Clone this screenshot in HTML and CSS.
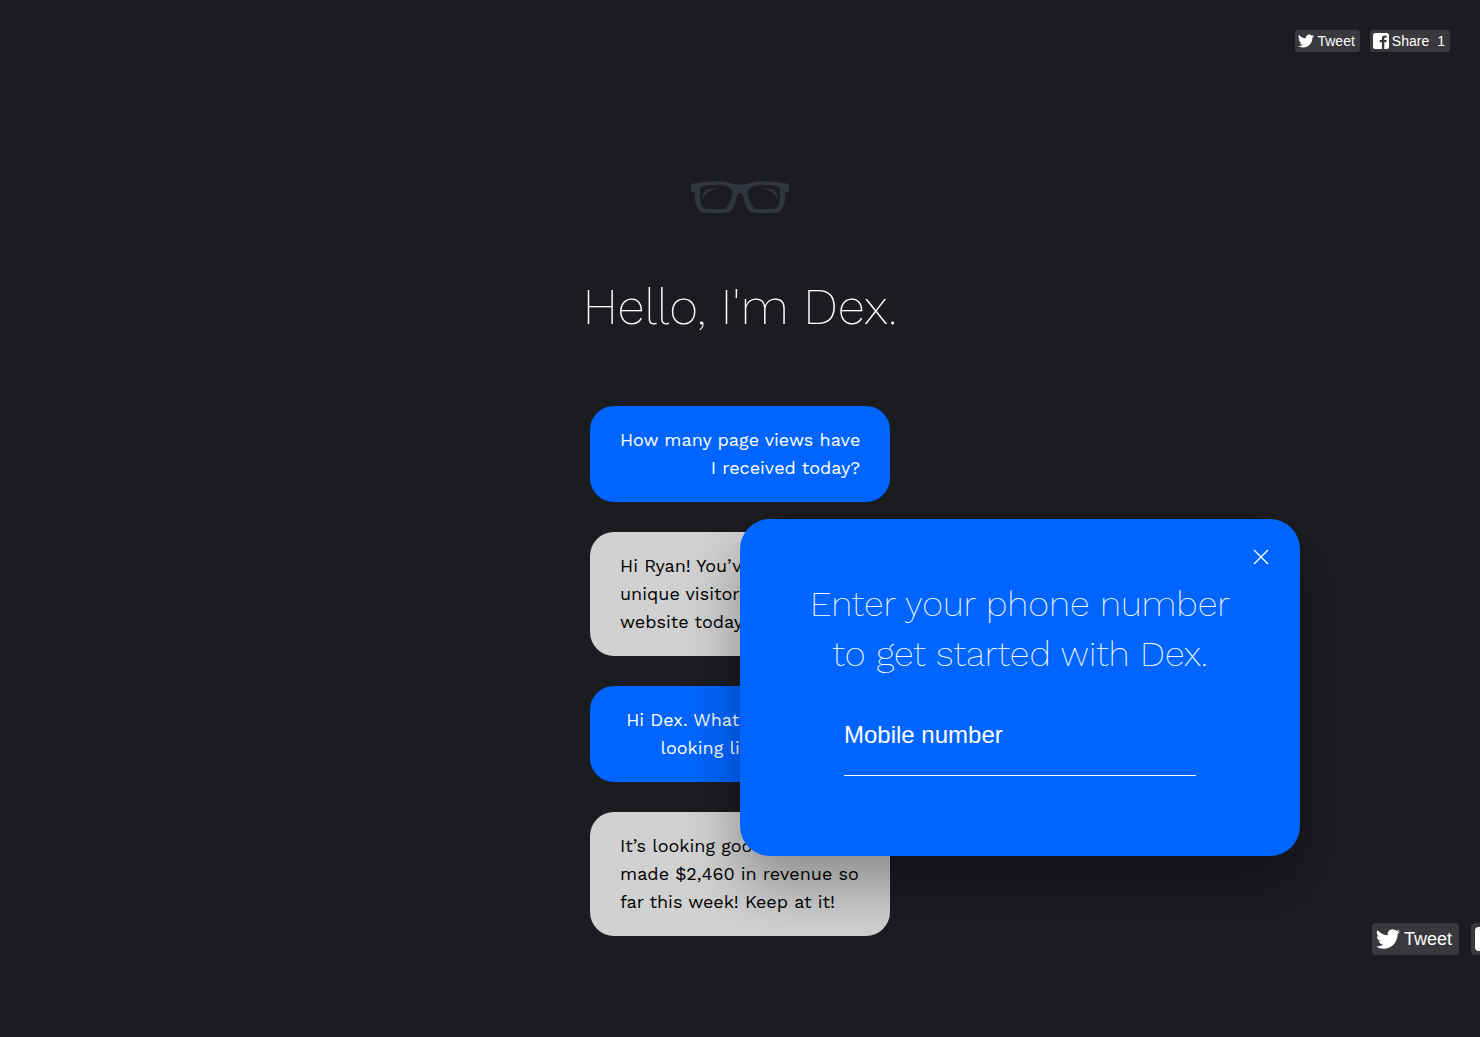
FILE: index.html
```html
<!DOCTYPE html>
<html lang="en">
<head>
  <meta charset="UTF-8">
  <meta name="viewport" content="width=device-width, initial-scale=1">
  <title>Dex</title>
  <link rel="stylesheet" href="styles.css">
</head>
<body>

<!-- shared icons -->
<svg class="sprite" aria-hidden="true">
  <symbol id="bird" viewBox="0 0 24 24">
    <path d="M23.95 4.57a10 10 0 0 1-2.82.77 4.96 4.96 0 0 0 2.16-2.72c-.95.55-2 .95-3.13 1.18a4.92 4.92 0 0 0-8.38 4.48C7.69 8.1 4.07 6.13 1.64 3.16a4.92 4.92 0 0 0 1.52 6.57 4.9 4.9 0 0 1-2.23-.61v.06a4.92 4.92 0 0 0 3.95 4.83 5 5 0 0 1-2.21.08 4.94 4.94 0 0 0 4.6 3.42A9.87 9.87 0 0 1 0 19.54a13.99 13.99 0 0 0 7.55 2.21c9.05 0 14-7.5 14-13.98 0-.21 0-.42-.02-.63a9.94 9.94 0 0 0 2.42-2.57z"/>
  </symbol>
  <symbol id="facebook" viewBox="0 0 16 16">
    <path d="M2.5 0h11A2.5 2.5 0 0 1 16 2.500v11a2.500 2.500 0 0 1-2.500 2.500H11.300V9.300h2l.3-2.200h-2.300V5.800c0-.8.4-1.200 1.200-1.200h1.200V2.600c-.4-.1-1-.1-1.800-.1-1.900 0-3 1.100-3 3v1.600H6.800v2.200h2.100V16H2.500A2.500 2.500 0 0 1 0 13.500v-11A2.500 2.500 0 0 1 2.500 0z"/>
  </symbol>
</svg>

<nav class="share">
  <a class="share-btn" href="#"><svg><use href="#bird"/></svg>Tweet</a>
  <a class="share-btn" href="#"><svg><use href="#facebook"/></svg>Share <span class="count">1</span></a>
</nav>

<main class="hero">
  <svg class="glasses" viewBox="0 0 98 34" aria-hidden="true">
    <path fill-rule="evenodd" d="M0 4C12 1 31 0 40 3c5 2 13 2 18 0 9-3 28-2 40 1v7c-2 1-4 1-4 3 0 6 0 11-3 15-2 3-5 4-9 4H66c-5 0-8-2-10-5-4-6-2-15-7-15s-3 9-7 15c-2 3-5 5-10 5H16c-4 0-7-1-9-4-3-4-3-9-3-15 0-2-2-2-4-3V4zM9 12c0 4 0 8 1 12 1 4 3 5 8 5h10c3 0 6 0 8-2s5-9 5-13c1-7-5-9-17-9S8 6 9 12zM89 12c0 4 0 8-1 12-1 4-3 5-8 5H70c-3 0-6 0-8-2s-5-9-5-13c-1-7 5-9 17-9s16 1 15 7z"/>
    <path d="M12 19c-1-9 5-11 14-10-8 1-12 4-14 10zM86 19c1-9-5-11-14-10 8 1 12 4 14 10z"/>
  </svg>
  <h1>Hello, I'm Dex.</h1>

  <div class="chat">
    <p class="bubble me">How many page views have<br>I received today?</p>
    <p class="bubble dex">Hi Ryan! You’ve had 940<br>unique visitors to your<br>website today.</p>
    <p class="bubble me">Hi Dex. What’s my revenue<br>looking like this week?</p>
    <p class="bubble dex">It’s looking good! You’ve<br>made $2,460 in revenue so<br>far this week! Keep at it!</p>
  </div>
</main>

<form class="modal">
  <button class="close" type="button" aria-label="Close">
    <svg viewBox="0 0 16 16"><path d="M1 1l14 14M15 1L1 15"/></svg>
  </button>
  <h2>Enter your phone number<br>to get started with Dex.</h2>
  <input type="tel" aria-label="Mobile number" placeholder="Mobile number">
</form>

<nav class="share share-large">
  <a class="share-btn" href="#"><svg><use href="#bird"/></svg>Tweet</a>
  <a class="share-btn" href="#" aria-label="Share"><svg><use href="#facebook"/></svg></a>
</nav>

</body>
</html>
```
FILE: styles.css
```css
* {
  box-sizing: border-box;
}
body {
  position: relative;
  margin: 0;
  min-height: 100vh;
  overflow: hidden;
  background: #1b1c20;
  color: #fff;
  font-family: "Work Sans", Inter, sans-serif;
}
.sprite {
  position: absolute;
  width: 0;
  height: 0;
}

/* share buttons */
.share {
  position: absolute;
  top: 30px;
  right: 30px;
  display: flex;
  gap: 10px;
}
.share-btn {
  display: flex;
  align-items: center;
  gap: 3px;
  height: 22px;
  padding: 0 5px 0 3px;
  border-radius: 3px;
  background: #39393d;
  color: #fff;
  font: 14px "Liberation Sans", Arial, sans-serif;
  text-decoration: none;
  white-space: nowrap;
}
.share-btn svg {
  width: 16px;
  height: 16px;
  fill: #fff;
}
.count {
  padding-left: 5px;
}
.share-large {
  top: auto;
  right: auto;
  bottom: 82px;
  left: calc(100% - 108px);
  gap: 12px;
}
.share-large .share-btn {
  gap: 4px;
  height: 32px;
  padding: 0 7px 0 4px;
  border-radius: 4px;
  font-size: 18px;
}
.share-large svg {
  width: 24px;
  height: 24px;
}

/* intro */
.hero {
  display: flex;
  flex-direction: column;
  align-items: center;
  padding: 180px 20px 100px;
}
.glasses {
  width: 98px;
  height: 34px;
  fill: #33353e;
}
h1 {
  margin: 63px 0 69px;
  font-size: 50px;
  font-weight: 200;
  line-height: 60px;
}
.chat {
  display: flex;
  flex-direction: column;
  gap: 30px;
  width: 300px;
}
.bubble {
  margin: 0;
  padding: 20px 30px;
  border-radius: 24px;
  font-size: 18px;
  line-height: 28px;
  white-space: nowrap;
}
.me {
  background: #0065ff;
  text-align: right;
}
.dex {
  background: #d1d1d1;
  color: #000;
}

/* phone number popup */
.modal {
  position: absolute;
  top: 50%;
  left: 50%;
  width: 560px;
  padding: 60px 60px 80px;
  border-radius: 30px;
  background: #0065ff;
  box-shadow: 0 30px 60px rgba(0,0,0,0.33);
  text-align: center;
}
.modal h2 {
  margin: 0 0 16px;
  font-size: 36px;
  font-weight: 200;
  line-height: 50px;
}
.modal input {
  width: 80%;
  height: 81px;
  padding: 0;
  border: 0;
  border-bottom: 1px solid #fff;
  border-radius: 0;
  outline: 0;
  background: none;
  color: #fff;
  font: 24px "Liberation Sans", Arial, sans-serif;
}
.modal input::placeholder {
  color: #fff;
  opacity: 1;
}
.close {
  position: absolute;
  top: 30px;
  right: 31px;
  width: 16px;
  height: 16px;
  padding: 0;
  border: 0;
  background: none;
  cursor: pointer;
}
.close svg {
  display: block;
  fill: none;
  stroke: #fff;
  stroke-width: 1.4;
}
```
